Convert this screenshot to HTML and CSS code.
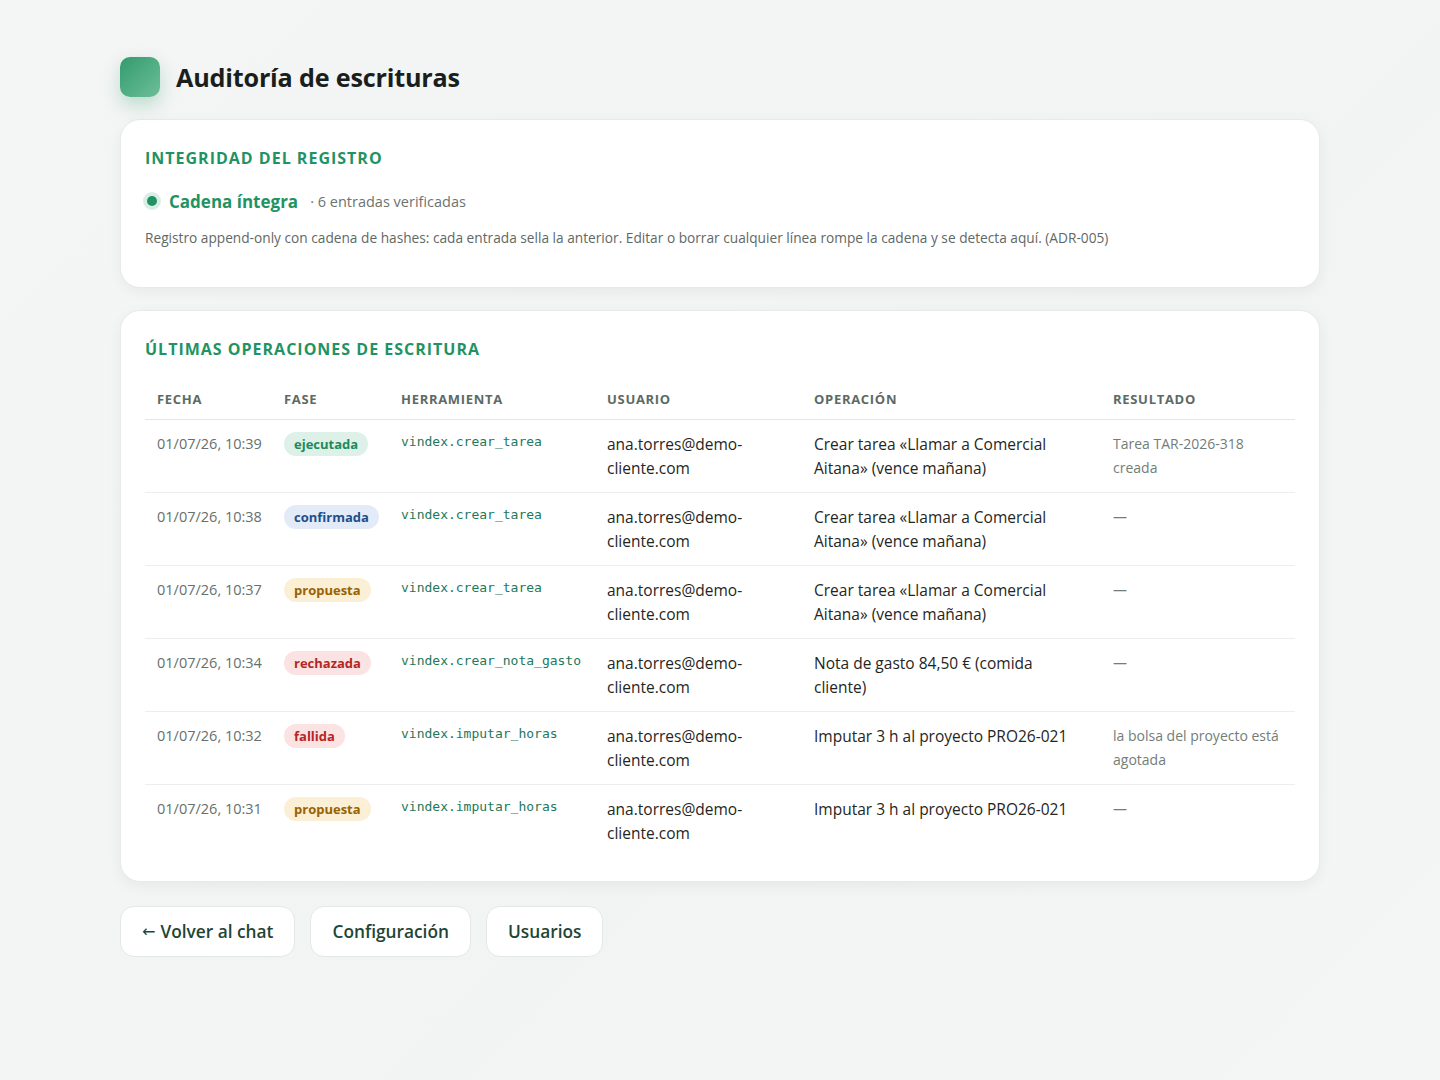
FILE: index.html
```html
<html>
<head>
    <meta charset="utf-8">
    <link rel="stylesheet" href="styles.css">
</head>
<body>
    <div class="page">
        <div class="page-header">
            <div class="logo"></div>
            <h1>Auditoría de escrituras</h1>
        </div>

        <section class="card">
            <h2>Integridad del registro</h2>
            <div class="chain-status">
                <span class="dot"></span>
                <span class="chain-ok">Cadena íntegra</span>
                <span class="chain-count">· 6 entradas verificadas</span>
            </div>
            <p class="note">Registro append-only con cadena de hashes: cada entrada sella la anterior. Editar o borrar cualquier línea rompe la cadena y se detecta aquí. (ADR-005)</p>
        </section>

        <section class="card">
            <h2>Últimas operaciones de escritura</h2>
            <table class="ops">
                <colgroup>
                    <col style="width: 127px">
                    <col style="width: 117px">
                    <col style="width: 206px">
                    <col style="width: 207px">
                    <col style="width: 299px">
                    <col>
                </colgroup>
                <thead>
                    <tr>
                        <th>Fecha</th>
                        <th>Fase</th>
                        <th>Herramienta</th>
                        <th>Usuario</th>
                        <th>Operación</th>
                        <th>Resultado</th>
                    </tr>
                </thead>
                <tbody>
                    <tr>
                        <td class="date">01/07/26, 10:39</td>
                        <td><span class="badge ok">ejecutada</span></td>
                        <td class="tool">vindex.crear_tarea</td>
                        <td>ana.torres@demo-cliente.com</td>
                        <td class="op">Crear tarea «Llamar a Comercial Aitana» (vence mañana)</td>
                        <td class="result">Tarea TAR-2026-318 creada</td>
                    </tr>
                    <tr>
                        <td class="date">01/07/26, 10:38</td>
                        <td><span class="badge info">confirmada</span></td>
                        <td class="tool">vindex.crear_tarea</td>
                        <td>ana.torres@demo-cliente.com</td>
                        <td class="op">Crear tarea «Llamar a Comercial Aitana» (vence mañana)</td>
                        <td class="result">—</td>
                    </tr>
                    <tr>
                        <td class="date">01/07/26, 10:37</td>
                        <td><span class="badge warn">propuesta</span></td>
                        <td class="tool">vindex.crear_tarea</td>
                        <td>ana.torres@demo-cliente.com</td>
                        <td class="op">Crear tarea «Llamar a Comercial Aitana» (vence mañana)</td>
                        <td class="result">—</td>
                    </tr>
                    <tr>
                        <td class="date">01/07/26, 10:34</td>
                        <td><span class="badge err">rechazada</span></td>
                        <td class="tool">vindex.crear_nota_gasto</td>
                        <td>ana.torres@demo-cliente.com</td>
                        <td class="op">Nota de gasto 84,50 € (comida cliente)</td>
                        <td class="result">—</td>
                    </tr>
                    <tr>
                        <td class="date">01/07/26, 10:32</td>
                        <td><span class="badge err">fallida</span></td>
                        <td class="tool">vindex.imputar_horas</td>
                        <td>ana.torres@demo-cliente.com</td>
                        <td class="op">Imputar 3 h al proyecto PRO26-021</td>
                        <td class="result">la bolsa del proyecto está agotada</td>
                    </tr>
                    <tr>
                        <td class="date">01/07/26, 10:31</td>
                        <td><span class="badge warn">propuesta</span></td>
                        <td class="tool">vindex.imputar_horas</td>
                        <td>ana.torres@demo-cliente.com</td>
                        <td class="op">Imputar 3 h al proyecto PRO26-021</td>
                        <td class="result">—</td>
                    </tr>
                </tbody>
            </table>
        </section>

        <nav class="actions">
            <a class="btn" href="#"><span class="arrow">←</span> Volver al chat</a>
            <a class="btn" href="#">Configuración</a>
            <a class="btn" href="#">Usuarios</a>
        </nav>
    </div>
</body>
</html>
```

FILE: styles.css
```css
body {
    margin: 0;
    min-height: 100vh;
    background: linear-gradient(135deg, #f4f5f5 0%, #f2f4f3 60%, #f3f6f4 100%);
    font-family: 'Segoe UI', 'Open Sans', sans-serif;
    color: #1f2a26;
}

.page {
    max-width: 1200px;
    margin: 0 auto;
    padding: 57px 0 40px;
}

.page-header {
    display: flex;
    align-items: center;
    gap: 16px;
    margin-bottom: 22px;
}

.logo {
    width: 40px;
    height: 40px;
    border-radius: 10px;
    background: linear-gradient(135deg, #339b6e, #6dbf98);
    box-shadow: 0 8px 18px rgba(46, 150, 105, 0.28);
}

h1 {
    margin: 0;
    font-size: 25.2px;
    font-weight: 700;
    color: #1a1f1d;
    letter-spacing: -0.2px;
}

.card {
    background: white;
    border: 1px solid #e6eae8;
    border-radius: 20px;
    box-shadow: 0 4px 14px rgba(0, 0, 0, 0.05);
    padding: 27px 24px 24px;
    margin-bottom: 22px;
}

h2 {
    margin: 0;
    font-size: 16px;
    line-height: 22px;
    font-weight: 700;
    text-transform: uppercase;
    letter-spacing: 1px;
    color: #1f9363;
}

.chain-status {
    display: flex;
    align-items: center;
    margin-top: 19px;
    height: 26px;
}

.dot {
    width: 10px;
    height: 10px;
    border-radius: 50%;
    background: #1f9363;
    box-shadow: 0 0 0 4px rgba(31, 147, 99, 0.16);
    margin: 0 12px 0 2px;
}

.chain-ok {
    font-size: 17px;
    font-weight: 700;
    color: #1f9363;
}

.chain-count {
    font-size: 14.5px;
    color: #6b7470;
    margin-left: 12px;
}

.note {
    margin: 14px 0 15px;
    font-size: 13.7px;
    line-height: 20px;
    color: #5f6864;
}

.ops {
    width: 100%;
    margin-top: 19px;
    border-collapse: collapse;
    table-layout: fixed;
}

.ops th {
    text-align: left;
    padding: 11px 12px;
    font-size: 13px;
    line-height: 18px;
    font-weight: 700;
    text-transform: uppercase;
    letter-spacing: 0.7px;
    color: #5d6a64;
    border-bottom: 1px solid #e2e7e4;
}

.ops td {
    vertical-align: top;
    padding: 12px;
    font-size: 15.5px;
    line-height: 24px;
    color: #1f2623;
    border-bottom: 1px solid #eceeed;
}

.ops tbody tr:last-child td {
    border-bottom: none;
}

.ops td.date {
    font-size: 14.5px;
    white-space: nowrap;
    color: #66706c;
}

.ops td.op {
    padding-right: 16px;
}

.ops td.result {
    font-size: 14px;
    padding-right: 8px;
    color: #737d79;
}

.ops td.tool {
    font-family: 'DejaVu Sans Mono', 'Liberation Mono', monospace;
    font-size: 13px;
    line-height: 20px;
    color: #24785a;
}

.badge {
    display: inline-block;
    padding: 3px 10px;
    border-radius: 12px;
    font-size: 13px;
    line-height: 18px;
    font-weight: 700;
}

.badge.ok {
    background: #ddf1e8;
    color: #1f8a5a;
}

.badge.info {
    background: #e2ebf7;
    color: #1f4e8c;
}

.badge.warn {
    background: #fbefd5;
    color: #9a6202;
}

.badge.err {
    background: #fbe3e3;
    color: #b52626;
}

.actions {
    display: flex;
    gap: 15px;
    margin-top: 24px;
}

.btn {
    display: inline-flex;
    align-items: center;
    height: 49px;
    padding: 0 21px;
    background: white;
    border: 1px solid #e3e7e5;
    border-radius: 14px;
    font-size: 17.3px;
    font-weight: 600;
    color: #1f4536;
    text-decoration: none;
}

.btn .arrow {
    font-family: 'DejaVu Sans', sans-serif;
    font-weight: 400;
    font-size: 16px;
    margin-right: 5px;
}

.btn:hover {
    background: #f7faf8;
}
```
